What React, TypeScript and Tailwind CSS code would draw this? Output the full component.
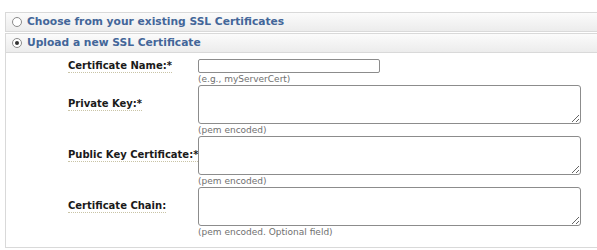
import React from 'react';

const Radio: React.FC<{ checked?: boolean }> = ({ checked }) => (
  <span className="w-[10px] h-[10px] rounded-full border border-[#8a8a8a] bg-white flex items-center justify-center shrink-0">
    {checked && <span className="w-[4px] h-[4px] rounded-full bg-[#333]" />}
  </span>
);

const SectionHeader: React.FC<{ checked?: boolean; title: string; className?: string }> = ({ checked, title, className }) => (
  <div
    className={`h-[20px] border border-r-0 border-[#d9d9d9] bg-linear-to-b from-[#fbfbfb] to-[#ececec] flex items-center pl-[6px] gap-[5px] ${className ?? ''}`}
  >
    <Radio checked={checked} />
    <span className="font-bold text-[10.7px] leading-none text-[#436699] whitespace-nowrap">{title}</span>
  </div>
);

interface FieldRowProps {
  label: string;
  hint: string;
  multiline?: boolean;
}

const FieldRow: React.FC<FieldRowProps> = ({ label, hint, multiline }) => (
  <div className="flex">
    <div className={`w-[130px] shrink-0 flex items-center ${multiline ? 'h-[39px]' : 'h-[14px]'}`}>
      <span className="font-bold text-[10px] leading-[12px] text-[#1a1a1a] border-b border-dotted border-[#c9c4a6] whitespace-nowrap">
        {label}
      </span>
    </div>
    <div className="flex flex-col">
      {multiline ? (
        <textarea className="w-[383px] h-[39px] border border-[#8c8c8c] rounded-[3px] bg-white resize" />
      ) : (
        <input type="text" className="w-[182px] h-[14px] border border-[#8c8c8c] rounded-[2px] bg-white" />
      )}
      <div className="h-[12px] text-[9px] leading-[12px] text-[#707070] whitespace-nowrap">{hint}</div>
    </div>
  </div>
);

export default function App() {
  return (
    <div className="w-[597px] h-[250px] bg-white overflow-hidden pt-[12px] pl-[5px] font-['DejaVu_Sans',Verdana,sans-serif]">
      <div className="w-[620px]">
        <SectionHeader title="Choose from your existing SSL Certificates" />
        <SectionHeader checked title="Upload a new SSL Certificate" className="mt-[1px]" />
        <div className="border-l border-b border-[#d9d9d9] pt-[6px] pb-[9px] pl-[62px]">
          <FieldRow label="Certificate Name:*" hint="(e.g., myServerCert)" />
          <FieldRow label="Private Key:*" hint="(pem encoded)" multiline />
          <FieldRow label="Public Key Certificate:*" hint="(pem encoded)" multiline />
          <FieldRow label="Certificate Chain:" hint="(pem encoded. Optional field)" multiline />
        </div>
      </div>
    </div>
  );
}
